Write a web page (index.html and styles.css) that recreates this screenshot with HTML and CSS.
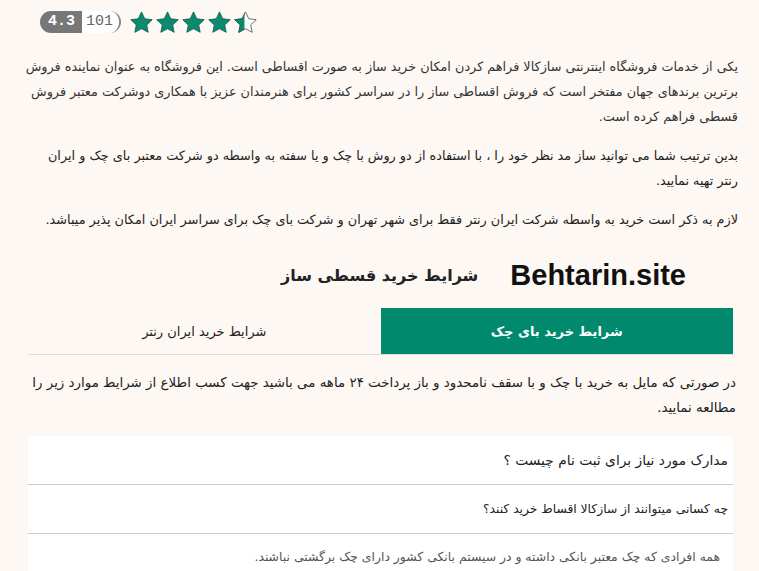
FILE: index.html
```html
<!DOCTYPE html>
<html lang="fa">
<head>
<meta charset="utf-8">
<link rel="stylesheet" href="styles.css">
</head>
<body>
<div class="page">
  <div class="rating">
    <span class="badge"><span class="score">4.3</span><span class="count">101</span></span>
    <span class="stars">
      <svg class="star" viewBox="0 0 24 24"><path d="M12 1.8l3.1 6.6 7.2.9-5.3 5 1.4 7.1L12 17.9l-6.4 3.5 1.4-7.1-5.3-5 7.2-.9z"/></svg>
      <svg class="star" viewBox="0 0 24 24"><path d="M12 1.8l3.1 6.6 7.2.9-5.3 5 1.4 7.1L12 17.9l-6.4 3.5 1.4-7.1-5.3-5 7.2-.9z"/></svg>
      <svg class="star" viewBox="0 0 24 24"><path d="M12 1.8l3.1 6.6 7.2.9-5.3 5 1.4 7.1L12 17.9l-6.4 3.5 1.4-7.1-5.3-5 7.2-.9z"/></svg>
      <svg class="star" viewBox="0 0 24 24"><path d="M12 1.8l3.1 6.6 7.2.9-5.3 5 1.4 7.1L12 17.9l-6.4 3.5 1.4-7.1-5.3-5 7.2-.9z"/></svg>
      <svg class="star half" viewBox="0 0 24 24"><defs><clipPath id="hc"><rect x="0" y="0" width="11" height="24"/></clipPath></defs><path class="empty" d="M12 1.8l3.1 6.6 7.2.9-5.3 5 1.4 7.1L12 17.9l-6.4 3.5 1.4-7.1-5.3-5 7.2-.9z"/><path class="fill" clip-path="url(#hc)" d="M12 1.8l3.1 6.6 7.2.9-5.3 5 1.4 7.1L12 17.9l-6.4 3.5 1.4-7.1-5.3-5 7.2-.9z"/></svg>
    </span>
  </div>

  <div class="content">
    <p class="para first">یکی از خدمات فروشگاه اینترنتی سازکالا فراهم کردن امکان خرید ساز به صورت اقساطی است. این فروشگاه به عنوان نماینده فروش برترین برندهای جهان مفتخر است که فروش اقساطی ساز را در سراسر کشور برای هنرمندان عزیز با همکاری دوشرکت معتبر فروش قسطی فراهم کرده است.</p>
    <p class="para alt narrow">بدین ترتیب شما می توانید ساز مد نظر خود را ، با استفاده از دو روش با چک و یا سفته به واسطه دو شرکت معتبر بای چک و ایران رنتر تهیه نمایید.</p>
    <p class="para alt">لازم به ذکر است خرید به واسطه شرکت ایران رنتر فقط برای شهر تهران و شرکت بای چک برای سراسر ایران امکان پذیر میباشد.</p>

    <div class="heading">
      <span class="site">Behtarin.site</span>
      <h2 class="title">شرایط خرید قسطی ساز</h2>
    </div>

    <div class="tabs">
      <div class="tab active">شرایط خرید بای چک</div>
      <div class="tab">شرایط خرید ایران رنتر</div>
    </div>

    <p class="para intro2">در صورتی که مایل به خرید با چک و با سقف نامحدود و باز پرداخت ۲۴ ماهه می باشید جهت کسب اطلاع از شرایط موارد زیر را مطالعه نمایید.</p>

    <div class="accordion">
      <div class="acc-item q1">مدارک مورد نیاز برای ثبت نام چیست ؟</div>
      <div class="acc-item q2">چه کسانی میتوانند از سازکالا اقساط خرید کنند؟</div>
      <div class="acc-body">همه افرادی که چک معتبر بانکی داشته و در سیستم بانکی کشور دارای چک برگشتی نباشند.</div>
    </div>
  </div>
</div>
</body>
</html>
```

FILE: styles.css
```css
html, body {
  margin: 0;
  padding: 0;
  background: #fdf8f3;
}
body {
  font-family: "DejaVu Sans", sans-serif;
  color: #222;
  overflow: hidden;
}
.page {
  width: 759px;
  height: 571px;
  overflow: hidden;
}
.rating {
  display: flex;
  align-items: center;
  gap: 8px;
  padding: 10px 0 0 40px;
  height: 24px;
}
.badge {
  display: flex;
  height: 22px;
  border-radius: 11px;
  overflow: hidden;
  font-family: "Liberation Mono", "DejaVu Sans Mono", monospace;
  font-size: 15px;
  line-height: 22px;
  border-right: 2px solid #888;
}
.score {
  background: #777;
  color: #fff;
  font-weight: bold;
  padding: 0 7px 0 8px;
}
.count {
  background: #fff;
  color: #666;
  padding: 0 6px 0 4px;
  border-radius: 0 11px 11px 0;
}
.stars {
  display: flex;
  gap: 1px;
}
.star {
  width: 25px;
  height: 25px;
}
.star path {
  fill: #0d8a6e;
  stroke: #0b5e4b;
  stroke-width: 0.8;
  stroke-linejoin: round;
}
.star path.empty {
  fill: #fff;
  stroke: #555;
}
.content {
  direction: rtl;
  padding: 0 21px 0 20px;
}
.para {
  margin: 14px 0 0;
  font-size: 12.8px;
  line-height: 25px;
  text-align: right;
  color: #333;
}
.para.first {
  margin-top: 20px;
}
.para.alt {
  color: #222;
}
.para.narrow {
  padding-left: 8px;
}
.heading {
  display: flex;
  align-items: center;
  justify-content: flex-start;
  gap: 32px;
  margin-top: 21px;
  padding-right: 52px;
  height: 44px;
}
.site {
  font-family: "Liberation Sans", Arial, sans-serif;
  font-weight: bold;
  font-size: 29px;
  color: #111;
  direction: ltr;
}
.title {
  margin: 0;
  font-size: 16px;
  font-weight: bold;
  color: #222;
}
.tabs {
  display: flex;
  margin: 11px 5px 0 8px;
  border-bottom: 1px solid #ddd;
}
.tab {
  flex: 1;
  height: 46px;
  display: flex;
  align-items: center;
  justify-content: center;
  font-size: 13px;
  color: #222;
}
.tab.active {
  background: #00896c;
  color: #fff;
  font-weight: bold;
}
.para.intro2 {
  margin: 15px 2px 0 0;
  font-size: 13.4px;
  color: #222;
}
.accordion {
  margin: 16px 5px 0 8px;
  background: #fff;
}
.acc-item {
  height: 48px;
  display: flex;
  align-items: center;
  padding: 0 5px;
  color: #222;
  border-bottom: 1.5px solid #ccc;
}
.acc-item.q1 {
  font-size: 13.8px;
}
.acc-item.q2 {
  font-size: 12.3px;
}
.acc-body {
  padding: 15px 13px;
  font-size: 12.4px;
  color: #555;
}
```
